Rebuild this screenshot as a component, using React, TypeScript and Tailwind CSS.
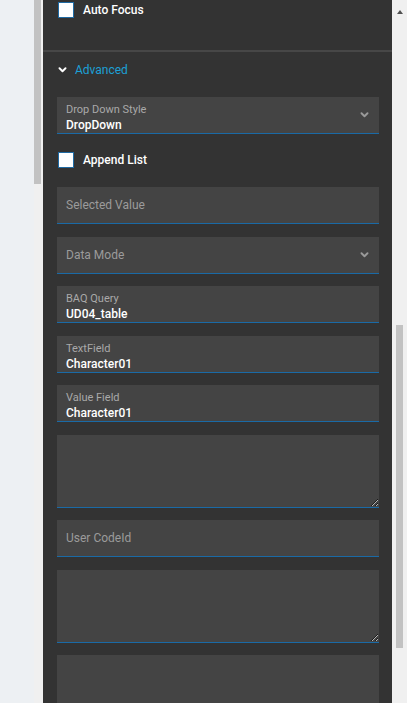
import React from 'react'

const font = { fontFamily: 'Roboto, Lato, "Noto Sans", sans-serif' }

function Chevron({ className }: { className: string }) {
  return (
    <svg className={className} viewBox="0 0 10 7" fill="none" stroke="currentColor" strokeWidth={2.2} strokeLinecap="round" strokeLinejoin="round">
      <path d="M1.5 1.5L5 5l3.5-3.5" />
    </svg>
  )
}

function Checkbox({ label }: { label: string }) {
  return (
    <div className="flex items-center h-[16px] pl-[15px]">
      <div className="w-[16px] h-[16px] bg-white border border-[#1f6aa3]" />
      <span className="ml-[9px] text-[12px] font-medium text-white leading-none">{label}</span>
    </div>
  )
}

function LabeledField({ label, value, select }: { label: string; value: string; select?: boolean }) {
  return (
    <div className="relative h-[37px] bg-[#444444] border-b border-[#1a6aa6] pl-[9px] pt-[6px] flex flex-col">
      <span className="text-[11px] text-[#a9a9a9] leading-[13px]">{label}</span>
      <span className="mt-[2px] text-[12px] font-medium text-white leading-[14px]">{value}</span>
      {select && <Chevron className="absolute right-[10px] top-[15px] w-[9px] h-[6px] text-[#9a9a9a]" />}
    </div>
  )
}

function PlaceholderField({ text, select }: { text: string; select?: boolean }) {
  return (
    <div className="relative h-[37px] bg-[#444444] border-b border-[#1a6aa6] pl-[9px] flex items-center">
      <span className="text-[12px] text-[#9b9b9b]">{text}</span>
      {select && <Chevron className="absolute right-[10px] top-[15px] w-[9px] h-[6px] text-[#9a9a9a]" />}
    </div>
  )
}

function Area() {
  return (
    <textarea
      readOnly
      className="block w-full h-[73px] bg-[#444444] border-0 border-b border-[#1a6aa6] outline-none resize-y"
    />
  )
}

export default function App() {
  return (
    <div className="flex w-[407px] h-[703px] overflow-hidden" style={font}>
      {/* left page edge */}
      <div className="w-[34px] shrink-0 bg-[#edf0f3]" />
      <div className="w-[9px] shrink-0 bg-[#f0f0f0]">
        <div className="w-[7px] h-[184px] bg-[#c2c2c2]" />
      </div>

      {/* panel */}
      <div className="w-[349px] shrink-0 bg-[#333333] overflow-hidden">
        <div className="pt-[2px]">
          <Checkbox label="Auto Focus" />
        </div>
        <div className="mt-[32px] h-[2px] bg-[#474747]" />

        <div className="mt-[10px] flex items-center h-[16px] pl-[15px]">
          <Chevron className="w-[9px] h-[6px] text-white" />
          <span className="ml-[8px] text-[12px] text-[#1ca0d6] leading-none">Advanced</span>
        </div>

        <div className="mt-[19px] pl-[14px] pr-[13px] flex flex-col">
          <LabeledField label="Drop Down Style" value="DropDown" select />
          <div className="mt-[18px] -ml-[14px]">
            <Checkbox label="Append List" />
          </div>
          <div className="mt-[19px]">
            <PlaceholderField text="Selected Value" />
          </div>
          <div className="mt-[13px]">
            <PlaceholderField text="Data Mode" select />
          </div>
          <div className="mt-[12px]">
            <LabeledField label="BAQ Query" value="UD04_table" />
          </div>
          <div className="mt-[13px]">
            <LabeledField label="TextField" value="Character01" />
          </div>
          <div className="mt-[12px]">
            <LabeledField label="Value Field" value="Character01" />
          </div>
          <div className="mt-[13px]">
            <Area />
          </div>
          <div className="mt-[12px]">
            <PlaceholderField text="User CodeId" />
          </div>
          <div className="mt-[13px]">
            <Area />
          </div>
          <div className="mt-[12px]">
            <Area />
          </div>
        </div>
      </div>

      {/* right scrollbar */}
      <div className="w-[15px] shrink-0 bg-[#f0f0f0] flex flex-col items-center">
        <div className="mt-[10px] w-0 h-0 border-l-[3px] border-r-[3px] border-b-[4px] border-l-transparent border-r-transparent border-b-[#505050]" />
        <div className="mt-[311px] w-[7px] h-[323px] bg-[#c2c2c2] -ml-[1px]" />
      </div>
    </div>
  )
}
